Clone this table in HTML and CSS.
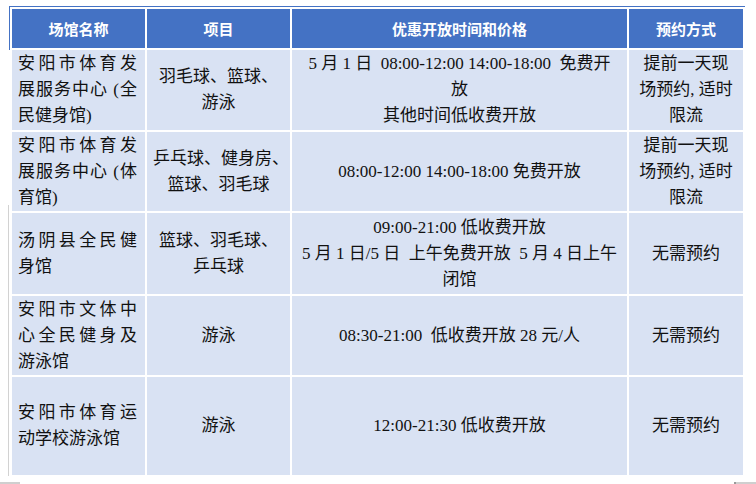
FILE: index.html
```html
<!DOCTYPE html>
<html lang="zh-CN">
<head>
<meta charset="utf-8">
<title>场馆优惠开放</title>
<link rel="stylesheet" href="styles.css">
</head>
<body>
<div class="frame">
  <table class="venues">
    <colgroup>
      <col class="c-name"><col class="c-item"><col class="c-time"><col class="c-book">
    </colgroup>
    <thead>
      <tr class="r-head">
        <th>场馆名称</th><th>项目</th><th>优惠开放时间和价格</th><th>预约方式</th>
      </tr>
    </thead>
    <tbody>
      <tr class="r1">
        <td class="name"><span class="ln j">安阳市体育发</span><span class="ln j">展服务中心 (全</span><span class="ln">民健身馆)</span></td>
        <td class="ctr">羽毛球、篮球、<br>游泳</td>
        <td class="ctr">5 月 1 日&nbsp; 08:00-12:00 14:00-18:00&nbsp; 免费开<br>放<br>其他时间低收费开放</td>
        <td class="ctr">提前一天现<br>场预约, 适时<br>限流</td>
      </tr>
      <tr class="r2">
        <td class="name"><span class="ln j">安阳市体育发</span><span class="ln j">展服务中心 (体</span><span class="ln">育馆)</span></td>
        <td class="ctr">乒乓球、健身房、<br>篮球、羽毛球</td>
        <td class="ctr">08:00-12:00 14:00-18:00 免费开放</td>
        <td class="ctr">提前一天现<br>场预约, 适时<br>限流</td>
      </tr>
      <tr class="r3">
        <td class="name"><span class="ln j">汤阴县全民健</span><span class="ln">身馆</span></td>
        <td class="ctr">篮球、羽毛球、<br>乒乓球</td>
        <td class="ctr">09:00-21:00 低收费开放<br>5 月 1 日/5 日&nbsp; 上午免费开放&nbsp; 5 月 4 日上午<br>闭馆</td>
        <td class="ctr">无需预约</td>
      </tr>
      <tr class="r4">
        <td class="name"><span class="ln j">安阳市文体中</span><span class="ln j">心全民健身及</span><span class="ln">游泳馆</span></td>
        <td class="ctr">游泳</td>
        <td class="ctr">08:30-21:00&nbsp; 低收费开放 28 元/人</td>
        <td class="ctr">无需预约</td>
      </tr>
      <tr class="r5">
        <td class="name"><span class="ln j">安阳市体育运</span><span class="ln">动学校游泳馆</span></td>
        <td class="ctr">游泳</td>
        <td class="ctr">12:00-21:30 低收费开放</td>
        <td class="ctr">无需预约</td>
      </tr>
    </tbody>
  </table>
</div>
<div class="marks"><span class="mark-l"></span><span class="mark-r"></span></div>
</body>
</html>
```
FILE: styles.css
```css
html, body {
  margin: 0;
  padding: 0;
  background: #ffffff;
}

body {
  width: 756px;
  height: 484px;
  overflow: hidden;
  font-family: "Liberation Serif", "Noto Sans CJK SC", serif;
  color: #111111;
}

.frame {
  position: relative;
  margin: 6px 0 0 9px;
  width: 736px;
  border-top: 1px solid #4472c4;
}

.frame::before {
  content: "";
  position: absolute;
  left: 0;
  top: -1px;
  width: 1px;
  height: 44px;
  background: #4472c4;
}

.frame::after {
  content: "";
  position: absolute;
  left: -1px;
  top: 198px;
  width: 1px;
  height: 271px;
  background: #d2d2d2;
}

.venues {
  margin-left: 1px;
  border-collapse: separate;
  border-spacing: 2px;
  table-layout: fixed;
  width: 735px;
}

.c-name { width: 133px; }
.c-item { width: 143px; }
.c-time { width: 335px; }
.c-book { width: 114px; }

.venues th {
  background: #4472c4;
  color: #ffffff;
  font-family: "Noto Sans CJK SC", "Liberation Sans", sans-serif;
  font-weight: 700;
  font-size: 15px;
  text-align: center;
  vertical-align: middle;
  padding: 0;
}

.venues td {
  background: #d9e2f3;
  font-size: 17px;
  line-height: 26px;
  vertical-align: middle;
  padding: 0 6px;
  white-space: nowrap;
}

.venues td.name {
  padding: 0 8px 0 6px;
}

.ln {
  display: block;
  text-align: left;
}

.ln.j {
  text-align: justify;
  text-align-last: justify;
}

.ctr {
  text-align: center;
}

.r-head { height: 39px; }
.r1 { height: 80px; }
.r2 { height: 79px; }
.r3 { height: 81px; }
.r4 { height: 79px; }
.r5 { height: 98px; }

.marks {
  display: flex;
  justify-content: space-between;
  margin-top: 5px;
  height: 2px;
}

.mark-l {
  width: 20px;
  height: 2px;
  background: #cfcfcf;
}

.mark-r {
  width: 20px;
  height: 2px;
  background: #cfcfcf;
  border-left: 2px solid #9a9a9a;
}
```
